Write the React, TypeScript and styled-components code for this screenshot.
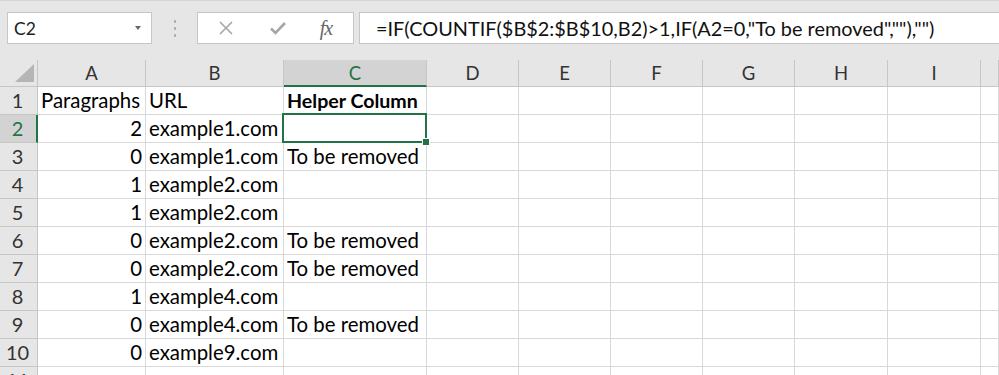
import React from 'react';
import styled, { createGlobalStyle, css } from 'styled-components';

const GlobalStyle = createGlobalStyle`
  html, body {
    margin: 0;
    padding: 0;
    background: #ffffff;
    overflow: hidden;
  }
  body {
    font-family: Lato, "Liberation Sans", sans-serif;
  }
`

const GREEN = '#217346'
const GRID = '#d9d9d9'
const HEAD_LINE = '#c6c6c6'

const Toolbar = styled.div`
  height: 60px;
  box-sizing: border-box;
  background: #e6e6e6;
  border-top: 1px solid #d6d6d6;
  display: flex;
  align-items: flex-start;
  padding: 11px 0 0 7px;
`

const NameBox = styled.div`
  width: 145px;
  height: 32px;
  box-sizing: border-box;
  background: #fff;
  border: 1px solid #c6c6c6;
  display: flex;
  align-items: center;
  justify-content: space-between;
  padding: 0 10px 0 6px;
  font-size: 17.5px;
  color: #222;
`

const Caret = styled.span`
  width: 0;
  height: 0;
  border-left: 3.5px solid transparent;
  border-right: 3.5px solid transparent;
  border-top: 4px solid #666;
`

const Grip = styled.div`
  width: 45px;
  height: 32px;
  display: flex;
  flex-direction: column;
  align-items: center;
  justify-content: center;
  gap: 4px;
  span {
    width: 2px;
    height: 3px;
    background: #b0b0b0;
  }
`

const FxBox = styled.div`
  width: 157px;
  height: 32px;
  box-sizing: border-box;
  background: #fff;
  border: 1px solid #c6c6c6;
  display: grid;
  grid-template-columns: 55px 50px 1fr;
  align-items: center;
  justify-items: center;
`

const Fx = styled.span`
  font-family: "Liberation Serif", "DejaVu Serif", serif;
  font-style: italic;
  font-size: 20px;
  color: #666;
  letter-spacing: -1px;
  padding-right: 4px;
`

const FormulaInput = styled.div`
  flex: 1;
  height: 32px;
  margin-left: 5px;
  box-sizing: border-box;
  background: #fff;
  border: 1px solid #c6c6c6;
  border-right: none;
  display: flex;
  align-items: center;
  padding-left: 16px;
  font-size: 19.9px;
  color: #111;
  white-space: nowrap;
`

const Sheet = styled.div`
  display: grid;
  grid-template-columns: 38px 108px 138px 143px 92px 92px 92px 92px 93px 93px 1fr;
  grid-template-rows: 27px;
  grid-auto-rows: 28px;
`

const Corner = styled.div`
  background: #e6e6e6;
  border-right: 1px solid ${HEAD_LINE};
  border-bottom: 1px solid ${HEAD_LINE};
  box-sizing: border-box;
  position: relative;
  &::after {
    content: '';
    position: absolute;
    right: 3px;
    bottom: 4px;
    width: 0;
    height: 0;
    border-left: 19px solid transparent;
    border-bottom: 18px solid #b5b5b5;
  }
`

const ColHead = styled.div<{ $active?: boolean }>`
  box-sizing: border-box;
  background: ${p => (p.$active ? '#d3d3d3' : '#e6e6e6')};
  border-right: 1px solid ${HEAD_LINE};
  border-bottom: ${p => (p.$active ? `2px solid ${GREEN}` : `1px solid ${HEAD_LINE}`)};
  color: ${p => (p.$active ? GREEN : '#333')};
  font-size: 18.5px;
  display: flex;
  align-items: center;
  justify-content: center;
  padding-top: ${p => (p.$active ? '1px' : '0')};
`

const RowHead = styled.div<{ $active?: boolean }>`
  box-sizing: border-box;
  background: ${p => (p.$active ? '#d3d3d3' : '#e6e6e6')};
  border-right: ${p => (p.$active ? `2px solid ${GREEN}` : `1px solid ${HEAD_LINE}`)};
  border-bottom: 1px solid ${HEAD_LINE};
  color: ${p => (p.$active ? GREEN : '#333')};
  font-size: 20px;
  line-height: 27px;
  text-align: center;
  padding-right: ${p => (p.$active ? '1px' : '2px')};
`

const Cell = styled.div<{ $num?: boolean; $bold?: boolean; $selected?: boolean }>`
  box-sizing: border-box;
  border-right: 1px solid ${GRID};
  border-bottom: 1px solid ${GRID};
  font-size: ${p => (p.$bold ? '19.6px' : '20.4px')};
  line-height: 27px;
  color: #000;
  white-space: nowrap;
  overflow: visible;
  padding: 0 3px 0 3px;
  text-align: ${p => (p.$num ? 'right' : 'left')};
  font-weight: ${p => (p.$bold ? 700 : 400)};
  position: relative;
  ${p =>
    p.$selected &&
    css`
      &::before {
        content: '';
        position: absolute;
        left: -2px;
        top: -2px;
        right: -1px;
        bottom: -1px;
        border: 2px solid ${GREEN};
        z-index: 1;
      }
      &::after {
        content: '';
        position: absolute;
        right: -4px;
        bottom: -4px;
        width: 6px;
        height: 6px;
        background: ${GREEN};
        border: 1px solid #fff;
        z-index: 2;
      }
    `}
`

const columns = ['A', 'B', 'C', 'D', 'E', 'F', 'G', 'H', 'I', 'J']

const rows: [string, string, string][] = [
  ['Paragraphs', 'URL', 'Helper Column'],
  ['2', 'example1.com', ''],
  ['0', 'example1.com', 'To be removed'],
  ['1', 'example2.com', ''],
  ['1', 'example2.com', ''],
  ['0', 'example2.com', 'To be removed'],
  ['0', 'example2.com', 'To be removed'],
  ['1', 'example4.com', ''],
  ['0', 'example4.com', 'To be removed'],
  ['0', 'example9.com', ''],
  ['', '', ''],
]

function App() {
  return (
    <>
      <GlobalStyle />
      <Toolbar>
        <NameBox>
          C2
          <Caret />
        </NameBox>
        <Grip>
          <span />
          <span />
          <span />
        </Grip>
        <FxBox>
          <svg width="16" height="16" viewBox="0 0 16 16">
            <path d="M2 2 L14 14 M14 2 L2 14" stroke="#a6a6a6" strokeWidth="1.6" fill="none" />
          </svg>
          <svg width="18" height="16" viewBox="0 0 18 16">
            <path d="M2 8.5 L6.5 13 L16 3" stroke="#a6a6a6" strokeWidth="2.6" fill="none" />
          </svg>
          <Fx>fx</Fx>
        </FxBox>
        <FormulaInput>=IF(COUNTIF($B$2:$B$10,B2)&gt;1,IF(A2=0,"To be removed",""),"")</FormulaInput>
      </Toolbar>
      <Sheet>
        <Corner />
        {columns.map(c => (
          <ColHead key={c} $active={c === 'C'}>
            {c === 'J' ? '' : c}
          </ColHead>
        ))}
        {rows.map((r, i) => (
          <React.Fragment key={i}>
            <RowHead $active={i === 1}>{i + 1}</RowHead>
            <Cell $num={i > 0}>{r[0]}</Cell>
            <Cell>{r[1]}</Cell>
            <Cell $bold={i === 0} $selected={i === 1}>
              {r[2]}
            </Cell>
            {columns.slice(3).map(c => (
              <Cell key={c} />
            ))}
          </React.Fragment>
        ))}
      </Sheet>
    </>
  )
}

export default App
